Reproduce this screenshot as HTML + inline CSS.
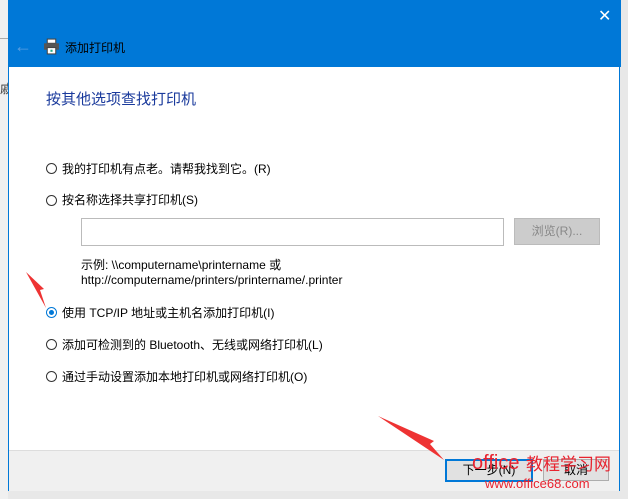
<!DOCTYPE html><html><head><meta charset="utf-8"><style>
body{margin:0;width:628px;height:499px;background:#e8e8e8;position:relative;overflow:hidden;font-family:"Liberation Sans","Noto Sans CJK SC",sans-serif;font-size:12px;color:#000}
.a{position:absolute}
.win{left:8px;top:0;width:612px;height:491px;background:#fff;border:1px solid #0078d7;border-top:none;box-sizing:border-box}
.hd{left:8px;top:0;width:613px;height:67px;background:#0078d7}
.r{width:11px;height:11px;border:1px solid #333;border-radius:50%;box-sizing:border-box;background:#fff}
.t{font-size:12px;white-space:nowrap}
</style></head><body>
<div class="a" style="left:0;top:0;width:8px;height:499px;background:#f0f0f0"></div>
<div class="a" style="left:0;top:38px;width:8px;height:1px;background:#aaa"></div>
<div class="a" style="left:0;top:80px;font-size:12px;color:#333">戚</div>
<div class="a win"></div>
<div class="a hd"></div>
<div class="a" style="left:14px;top:36px;color:#5a9ee0;font-size:18px">&#8592;</div>
<svg class="a" style="left:43px;top:38px" width="17" height="17" viewBox="0 0 16 16"><rect x="4" y="1" width="8" height="4" fill="#fff" stroke="#444"/><rect x="1" y="5" width="14" height="6" fill="#555"/><rect x="4" y="9" width="8" height="6" fill="#fff" stroke="#444"/><rect x="7" y="11" width="2" height="2" fill="#2a8"/></svg>
<div class="a t" style="left:65px;top:39px;color:#000">添加打印机</div>
<div class="a" style="left:598px;top:6px;color:#fff;font-size:16px">✕</div>
<div class="a" style="left:46px;top:88px;font-size:15px;color:#1a3a9c">按其他选项查找打印机</div>
<div class="a r" style="left:46px;top:163px"></div><div class="a t" style="left:62px;top:160px">我的打印机有点老。请帮我找到它。(R)</div>
<div class="a r" style="left:46px;top:195px"></div><div class="a t" style="left:62px;top:191px">按名称选择共享打印机(S)</div>
<div class="a" style="left:81px;top:218px;width:423px;height:28px;border:1px solid #bbb;box-sizing:border-box"></div>
<div class="a" style="left:514px;top:218px;width:86px;height:27px;background:#ccc;border:1px solid #bbb;box-sizing:border-box;color:#888;text-align:center;line-height:25px">浏览(R)...</div>
<div class="a t" style="left:81px;top:256px">示例: \\computername\printername 或</div>
<div class="a t" style="left:81px;top:273px">http://computername/printers/printername/.printer</div>
<div class="a r" style="left:46px;top:307px;border-color:#0078d7"></div><div class="a" style="left:49px;top:310px;width:5px;height:5px;border-radius:50%;background:#0078d7"></div>
<div class="a t" style="left:62px;top:304px">使用 TCP/IP 地址或主机名添加打印机(I)</div>
<div class="a r" style="left:46px;top:339px"></div><div class="a t" style="left:62px;top:336px">添加可检测到的 Bluetooth、无线或网络打印机(L)</div>
<div class="a r" style="left:46px;top:371px"></div><div class="a t" style="left:62px;top:368px">通过手动设置添加本地打印机或网络打印机(O)</div>
<div class="a" style="left:9px;top:450px;width:610px;height:40px;background:#f0f0f0;border-top:1px solid #ddd"></div>
<div class="a" style="left:445px;top:459px;width:88px;height:23px;border:2px solid #0078d7;background:#e1e1e1;box-sizing:border-box;text-align:center;line-height:19px">下一步(N)</div>
<div class="a" style="left:543px;top:459px;width:66px;height:22px;border:1px solid #adadad;background:#e1e1e1;box-sizing:border-box;text-align:center;line-height:20px">取消</div>
<svg class="a" style="left:0;top:0" width="628" height="499"><polygon points="26,272 46,308 40,290 44,289" fill="#e33"/><polygon points="378,416 444,460 430,444 434,441" fill="#e33"/></svg>
<div class="a" style="left:472px;top:452px;color:#e8232f;font-size:20px;white-space:nowrap;font-family:'Liberation Sans',sans-serif;font-variant-ligatures:none;font-feature-settings:'liga' 0">offi&#8203;ce</div>
<div class="a" style="left:526px;top:451px;color:#e8232f;font-size:17px;white-space:nowrap;font-family:'Noto Sans CJK SC',sans-serif;line-height:24px">教程学习网</div>
<div class="a" style="left:485px;top:476px;color:#e8232f;font-size:13px;font-family:'Liberation Sans',sans-serif">www.office68.com</div>
</body></html>
